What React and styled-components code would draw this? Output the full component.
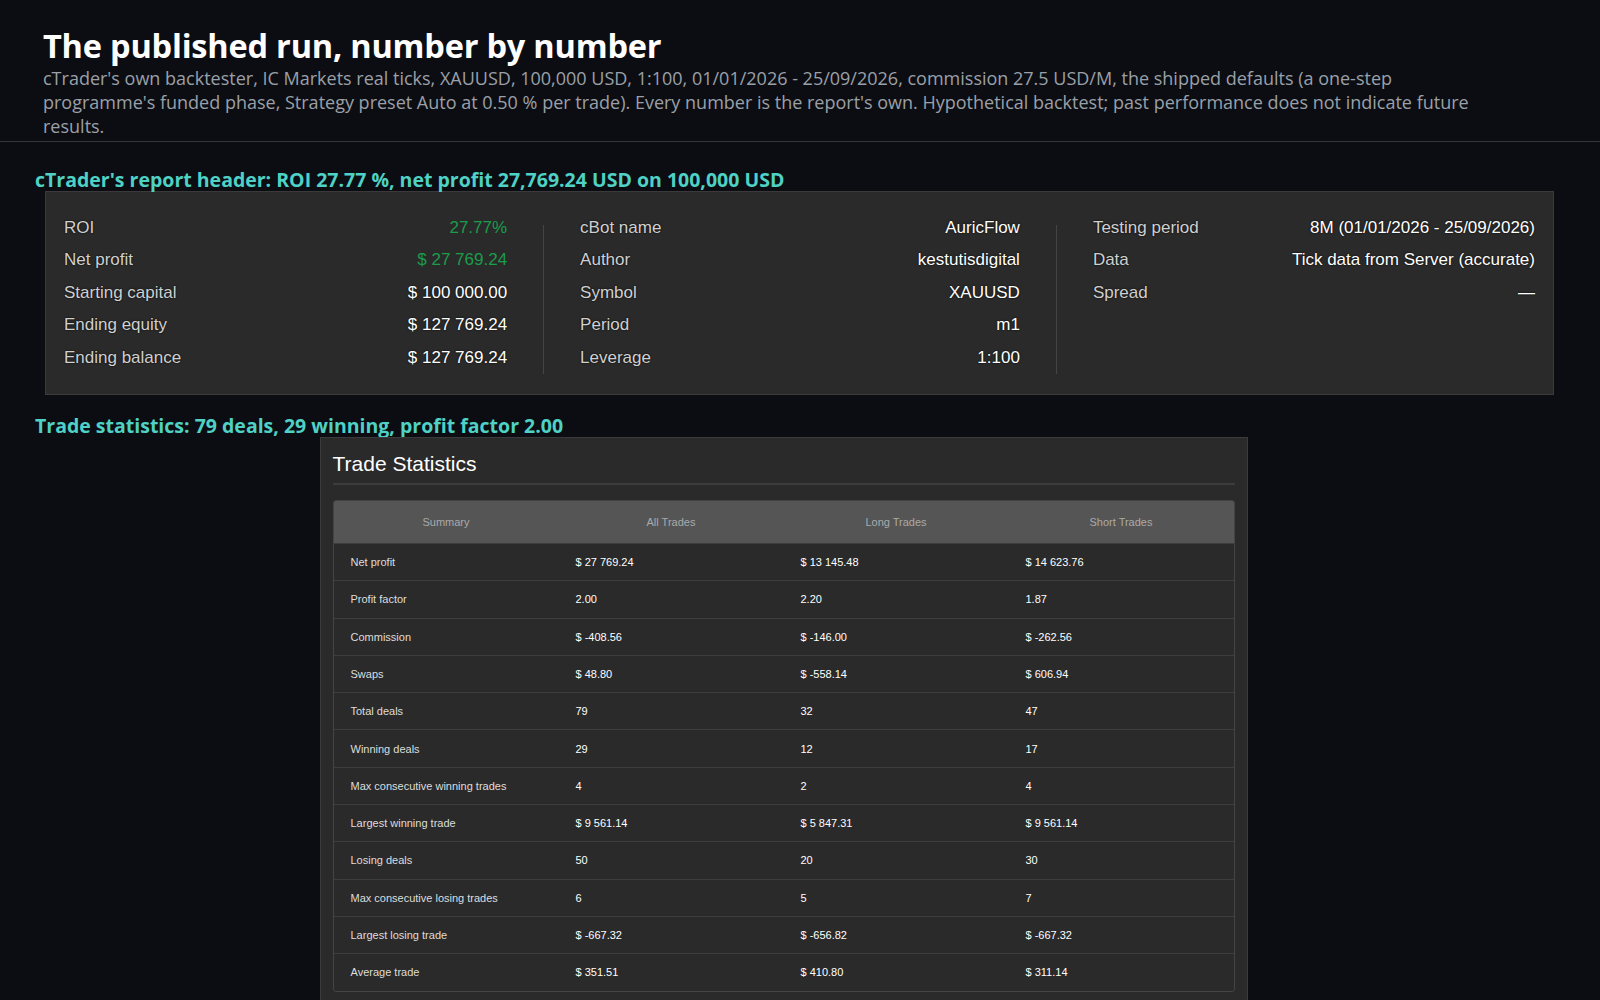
import React from "react";
import styled, { createGlobalStyle } from "styled-components";

const Global = createGlobalStyle`
  body { margin: 0; background: #0c0d12; }
`;
const Page = styled.div`
  font-family: "Open Sans", "Noto Sans", sans-serif;
  color: #fff;
  padding-top: 26px;
  padding-bottom: 20px;
`;
const Head = styled.header`
  padding: 0 43px 3px;
  border-bottom: 1px solid #33363d;
`;
const Title = styled.h1`
  margin: 0;
  font-size: 32.5px;
  font-weight: 700;
  line-height: 40px;
  letter-spacing: -0.2px;
`;
const Sub = styled.p`
  margin: 0;
  font-size: 18px;
  line-height: 24px;
  color: #9aa0a8;
  letter-spacing: 0;
  max-width: 1440px;
`;
const Section = styled.h2`
  margin: ${p => p.$top}px 0 0 35px;
  font-size: 19.5px;
  line-height: 22px;
  font-weight: 700;
  color: #4fd1c5;
`;
const Report = styled.div`
  margin: 0 46px 0 45px;
  background: #2a2a2a;
  border: 1px solid #3a3a3a;
  padding: 19px 18px 20px;
  display: grid;
  grid-template-columns: 469fr 502fr 469fr;
  font-family: "Liberation Sans", Arial, sans-serif;
  font-size: 17px;
  text-shadow: 0 0 2px #000;
`;
const Col = styled.div`
  padding: 0 ${p => (p.$last ? 0 : 36)}px 0 ${p => (p.$first ? 0 : 36)}px;
  border-left: ${p => (p.$first ? "none" : "1px solid #444")};
  margin: 14px 0 0;
  display: flex;
  flex-direction: column;
  & > div:first-child { margin-top: -13px; }
`;
const KV = styled.div`
  display: flex;
  justify-content: space-between;
  height: 32.4px;
  line-height: 32.4px;
  color: #d0d0d0;
`;
const Val = styled.span`
  color: ${p => (p.$green ? "#1a9c4a" : "#fff")};
  text-shadow: ${p => (p.$green ? "none" : "0 0 2px #000")};
`;
const StatsWrap = styled.div`
  display: flex;
  justify-content: center;
  margin-right: 33px;
`;
const Stats = styled.div`
  box-sizing: border-box;
  width: 928px;
  background: #2a2a2a;
  border: 1px solid #3a3a3a;
  padding: 12px 12px 16px;
  font-family: "Liberation Sans", Arial, sans-serif;
`;
const STitle = styled.div`
  font-size: 21px;
  line-height: 28px;
  padding-bottom: 5px;
  border-bottom: 2px solid #3d3d3d;
  margin-bottom: 15px;
`;
const Table = styled.div`
  border: 1px solid #444;
  border-radius: 3px;
  overflow: hidden;
`;
const Row = styled.div`
  display: grid;
  grid-template-columns: repeat(4, 1fr);
  height: ${p => (p.$head ? 42 : 37.3)}px;
  align-items: center;
  background: ${p => (p.$head ? "#555" : "transparent")};
  border-top: ${p => (p.$first ? "none" : "1px solid #3d3d3d")};
  font-size: 11px;
  color: ${p => (p.$head ? "#aaa" : "#fff")};
  box-sizing: border-box;
`;
const Cell = styled.div`
  padding-left: ${p => (p.$head ? 0 : 17)}px;
  text-align: ${p => (p.$head ? "center" : "left")};
  color: ${p => (p.$label ? "#ddd" : "inherit")};
`;

const left = [["ROI", "27.77%", 1], ["Net profit", "$ 27 769.24", 1], ["Starting capital", "$ 100 000.00"], ["Ending equity", "$ 127 769.24"], ["Ending balance", "$ 127 769.24"]];
const mid = [["cBot name", "AuricFlow"], ["Author", "kestutisdigital"], ["Symbol", "XAUUSD"], ["Period", "m1"], ["Leverage", "1:100"]];
const right = [["Testing period", "8M (01/01/2026 - 25/09/2026)"], ["Data", "Tick data from Server (accurate)"], ["Spread", "—"]];

const rows = [
  ["Net profit", "$ 27 769.24", "$ 13 145.48", "$ 14 623.76"],
  ["Profit factor", "2.00", "2.20", "1.87"],
  ["Commission", "$ -408.56", "$ -146.00", "$ -262.56"],
  ["Swaps", "$ 48.80", "$ -558.14", "$ 606.94"],
  ["Total deals", "79", "32", "47"],
  ["Winning deals", "29", "12", "17"],
  ["Max consecutive winning trades", "4", "2", "4"],
  ["Largest winning trade", "$ 9 561.14", "$ 5 847.31", "$ 9 561.14"],
  ["Losing deals", "50", "20", "30"],
  ["Max consecutive losing trades", "6", "5", "7"],
  ["Largest losing trade", "$ -667.32", "$ -656.82", "$ -667.32"],
  ["Average trade", "$ 351.51", "$ 410.80", "$ 311.14"],
];

const KVCol = ({ items, ...p }) => (
  <Col {...p}>
    {items.map(([k, v, g]) => (
      <KV key={k}><span>{k}</span><Val $green={g}>{v}</Val></KV>
    ))}
  </Col>
);

export default function App() {
  return (
    <Page>
      <Global />
      <Head>
        <Title>The published run, number by number</Title>
        <Sub>cTrader's own backtester, IC Markets real ticks, XAUUSD, 100,000 USD, 1:100, 01/01/2026 - 25/09/2026, commission 27.5 USD/M, the shipped defaults (a one-step programme's funded phase, Strategy preset Auto at 0.50 % per trade). Every number is the report's own. Hypothetical backtest; past performance does not indicate future results.</Sub>
      </Head>
      <Section $top={27}>cTrader's report header: ROI 27.77 %, net profit 27,769.24 USD on 100,000 USD</Section>
      <Report>
        <KVCol items={left} $first />
        <KVCol items={mid} />
        <KVCol items={right} $last />
      </Report>
      <Section $top={20}>Trade statistics: 79 deals, 29 winning, profit factor 2.00</Section>
      <StatsWrap>
        <Stats>
          <STitle>Trade Statistics</STitle>
          <Table>
            <Row $head $first>
              {["Summary", "All Trades", "Long Trades", "Short Trades"].map(h => <Cell $head key={h}>{h}</Cell>)}
            </Row>
            {rows.map(r => (
              <Row key={r[0]}>
                {r.map((c, i) => <Cell key={i} $label={i === 0}>{c}</Cell>)}
              </Row>
            ))}
          </Table>
        </Stats>
      </StatsWrap>
    </Page>
  );
}
